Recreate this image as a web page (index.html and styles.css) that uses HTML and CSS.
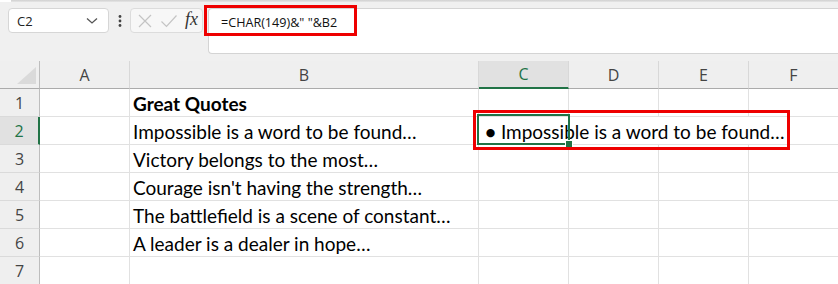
FILE: index.html
```html
<!DOCTYPE html>
<html lang="en">

<head>
  <meta charset="UTF-8">
  <title>CHAR(149) bullets</title>
  <link rel="stylesheet" href="styles.css">
</head>

<body>
  <div class="ribbon-edge"></div>

  <div class="toolbar">
    <div class="namebox">
      <span>C2</span>
      <svg width="12" height="8" viewBox="0 0 12 8"><path d="M1 1.5 L6 6 L11 1.5" fill="none" stroke="#555" stroke-width="1.3"/></svg>
    </div>
    <div class="dots">
      <svg width="4" height="12" viewBox="0 0 4 12"><circle cx="2" cy="1.5" r="1.4" fill="#444"/><circle cx="2" cy="6" r="1.4" fill="#444"/><circle cx="2" cy="10.5" r="1.4" fill="#444"/></svg>
    </div>
    <div class="fxbox">
      <svg width="16" height="16" viewBox="0 0 16 16"><path d="M2 2 L14 14 M14 2 L2 14" stroke="#c4c4c4" stroke-width="1.2"/></svg>
      <svg width="18" height="16" viewBox="0 0 18 16"><path d="M1.5 8.5 L6.5 13.5 L16.5 2.5" fill="none" stroke="#c4c4c4" stroke-width="1.2"/></svg>
      <span class="fx">fx</span>
    </div>
    <div class="formula">
      <span>=CHAR(149)&amp;" "&amp;B2</span>
      <div class="mark mark-formula"></div>
    </div>
  </div>

  <div class="sheet">
    <div class="corner">
      <svg width="40" height="28" viewBox="0 0 40 28"><path d="M17 23 L36 23 L36 6 Z" fill="#dadada"/></svg>
    </div>
    <div class="colhead">A</div>
    <div class="colhead">B</div>
    <div class="colhead active">C</div>
    <div class="colhead">D</div>
    <div class="colhead">E</div>
    <div class="colhead">F</div>

    <div class="rowhead">1</div>
    <div class="cell"></div>
    <div class="cell bold">Great Quotes</div>
    <div class="cell"></div><div class="cell"></div><div class="cell"></div><div class="cell"></div>

    <div class="rowhead active">2</div>
    <div class="cell"></div>
    <div class="cell">Impossible is a word to be found…</div>
    <div class="cell overflow">
      <span><span class="bullet">•</span> Impossible is a word to be found…</span>
      <div class="selection"><div class="handle"></div></div>
      <div class="mark mark-cell"></div>
    </div>

    <div class="rowhead">3</div>
    <div class="cell"></div>
    <div class="cell">Victory belongs to the most…</div>
    <div class="cell"></div><div class="cell"></div><div class="cell"></div><div class="cell"></div>

    <div class="rowhead">4</div>
    <div class="cell"></div>
    <div class="cell">Courage isn't having the strength…</div>
    <div class="cell"></div><div class="cell"></div><div class="cell"></div><div class="cell"></div>

    <div class="rowhead">5</div>
    <div class="cell"></div>
    <div class="cell">The battlefield is a scene of constant…</div>
    <div class="cell"></div><div class="cell"></div><div class="cell"></div><div class="cell"></div>

    <div class="rowhead">6</div>
    <div class="cell"></div>
    <div class="cell">A leader is a dealer in hope…</div>
    <div class="cell"></div><div class="cell"></div><div class="cell"></div><div class="cell"></div>

    <div class="rowhead">7</div>
    <div class="cell"></div><div class="cell"></div>
    <div class="cell"></div><div class="cell"></div><div class="cell"></div><div class="cell"></div>
  </div>
</body>

</html>
```

FILE: styles.css
```css
html,
body {
  margin: 0;
  padding: 0;
  overflow: hidden;
}

body {
  width: 838px;
  height: 284px;
  background: #fff;
  font-family: Lato, "Liberation Sans", sans-serif;
}

.ribbon-edge {
  height: 2px;
  margin-left: 11px;
  background: linear-gradient(#d0d0d0, #e6e6e6);
}

.toolbar {
  display: flex;
  align-items: flex-start;
  height: 59px;
  padding-top: 6px;
  box-sizing: border-box;
  background: #f0f0f0;
}

.namebox {
  display: flex;
  align-items: center;
  justify-content: space-between;
  width: 101px;
  height: 25px;
  margin-left: 8px;
  padding: 0 10px 0 8px;
  box-sizing: border-box;
  background: #fff;
  border: 1px solid #d6d6d6;
  border-radius: 4px;
  font-family: "Open Sans", sans-serif;
  font-size: 13px;
  color: #222;
}

.dots {
  display: flex;
  justify-content: center;
  width: 21px;
  padding-top: 7px;
}

.fxbox {
  display: flex;
  align-items: center;
  gap: 7px;
  width: 73px;
  height: 25px;
  padding-left: 6px;
  box-sizing: border-box;
  background: #f7f7f7;
  border: 1px solid #dcdcdc;
  border-radius: 4px;
}

.fx {
  font-family: "Liberation Serif", serif;
  font-style: italic;
  font-size: 18px;
  color: #333;
  margin-top: -3px;
}

.formula {
  position: relative;
  flex: 1;
  height: 46px;
  margin-left: 5px;
  padding: 5px 0 0 12px;
  box-sizing: border-box;
  background: #fff;
  border: 1px solid #d4d4d4;
  border-right: none;
  border-radius: 4px 0 0 4px;
  font-family: "Open Sans", sans-serif;
  font-size: 12.6px;
  color: #111;
}

.mark {
  position: absolute;
  border: 3px solid #ee0000;
  box-sizing: border-box;
}

.mark-formula {
  left: -5px;
  top: -4px;
  width: 153px;
  height: 31px;
}

.sheet {
  display: grid;
  grid-template-columns: 40px 90px 349px 90px 90px 90px 90px;
  grid-auto-rows: 28px;
}

.corner,
.colhead,
.rowhead,
.cell {
  box-sizing: border-box;
}

.corner {
  background: #efefef;
  border-right: 1px solid #bdbdbd;
  border-bottom: 1px solid #ababab;
}

.colhead {
  display: flex;
  align-items: center;
  justify-content: center;
  background: #efefef;
  border-right: 1px solid #d8d8d8;
  border-bottom: 1px solid #ababab;
  font-family: "Open Sans", sans-serif;
  font-size: 16px;
  color: #444;
}

.colhead.active {
  background: #e1e1e1;
  border-bottom: 2px solid #217346;
  color: #217346;
}

.rowhead {
  display: flex;
  align-items: center;
  justify-content: center;
  padding-top: 1px;
  background: #efefef;
  border-right: 1px solid #bdbdbd;
  border-bottom: 1px solid #dadada;
  font-family: "Open Sans", sans-serif;
  font-size: 16px;
  color: #444;
}

.rowhead.active {
  background: #e1e1e1;
  border-right: 2px solid #217346;
  color: #217346;
}

.cell {
  display: flex;
  align-items: center;
  padding: 1px 0 0 3px;
  border-right: 1px solid #e1e1e1;
  border-bottom: 1px solid #e1e1e1;
  font-size: 19px;
  color: #000;
  white-space: nowrap;
}

.cell.bold {
  font-weight: bold;
}

.cell.overflow {
  position: relative;
  grid-column: span 4;
  border-right: none;
}

.bullet {
  font-weight: bold;
  margin-left: 3px;
}

.selection {
  position: absolute;
  left: -2px;
  top: -3px;
  width: 93px;
  height: 31px;
  border: 2px solid #217346;
  box-sizing: border-box;
}

.handle {
  position: absolute;
  right: -5px;
  bottom: -5px;
  width: 6px;
  height: 6px;
  background: #217346;
  border: 1px solid #fff;
}

.mark-cell {
  left: -6px;
  top: -7px;
  width: 317px;
  height: 40px;
}
```
